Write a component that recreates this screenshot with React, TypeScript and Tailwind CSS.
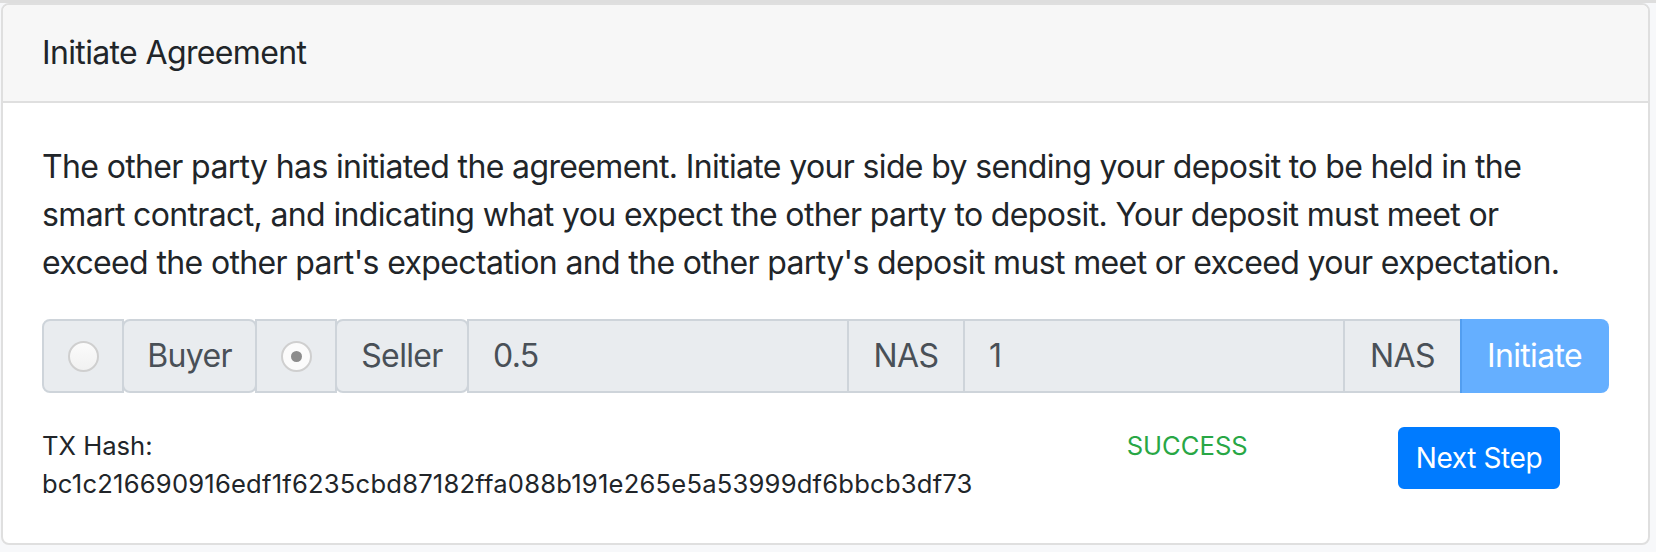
import React from "react";

const font = { fontFamily: "Inter, 'Noto Sans', sans-serif" };

function Radio({ checked }: { checked?: boolean }) {
  return (
    <div
      className={
        "flex h-[31px] w-[31px] items-center justify-center rounded-full border-2 border-[#cfcfcf] " +
        (checked ? "bg-[#fbfbfb]" : "bg-gradient-to-b from-[#fbfbfb] to-[#f1f1f1]")
      }
    >
      {checked ? <div className="h-[11px] w-[11px] rounded-full bg-[#8c8c8c]" /> : null}
    </div>
  );
}

export default function App() {
  return (
    <div className="min-h-screen bg-[#f7f8fa] text-[#212529]" style={font}>
      <div className="h-[3px] bg-[#dedede]" />
      <div className="ml-[1px] mr-[6px] overflow-hidden rounded-[8px] border-2 border-[#dfdfdf] bg-white">
        <div className="border-b-2 border-[#dfdfdf] bg-[#f7f7f7] px-[39px] py-[24px] text-[32px] leading-[48px] tracking-[-0.64px]">
          Initiate Agreement
        </div>
        <div className="p-[39px] pt-[40px]">
          <p className="mb-[32px] text-[32px] leading-[48px] tracking-[-0.64px]">
            <span className="block whitespace-nowrap">
              The other party has initiated the agreement. Initiate your side by sending your deposit to be held in the
            </span>
            <span className="block whitespace-nowrap">
              smart contract, and indicating what you expect the other party to deposit. Your deposit must meet or
            </span>
            <span className="block whitespace-nowrap">
              exceed the other part's expectation and the other party's deposit must meet or exceed your expectation.
            </span>
          </p>

          <div className="flex h-[74px] text-[32px] leading-[48px] tracking-[-0.64px] text-[#495057]">
            <div className="flex w-[82px] items-center justify-center rounded-l-[8px] border-2 border-[#ced4da] bg-[#e9ecef]">
              <Radio />
            </div>
            <div className="-ml-[2px] flex w-[135px] items-center justify-center rounded-[8px] border-2 border-[#ced4da] bg-[#e9ecef]">
              Buyer
            </div>
            <div className="-ml-[2px] flex w-[82px] items-center justify-center border-2 border-[#ced4da] bg-[#e9ecef]">
              <Radio checked />
            </div>
            <div className="-ml-[2px] flex w-[134px] items-center justify-center rounded-[8px] border-2 border-[#ced4da] bg-[#e9ecef]">
              Seller
            </div>
            <div className="-ml-[2px] flex min-w-0 flex-1 items-center border-2 border-[#ced4da] bg-[#e9ecef] px-[24px]">
              0.5
            </div>
            <div className="-ml-[2px] flex w-[118px] items-center justify-center border-2 border-[#ced4da] bg-[#e9ecef]">
              NAS
            </div>
            <div className="-ml-[2px] flex min-w-0 flex-1 items-center border-2 border-[#ced4da] bg-[#e9ecef] px-[24px]">
              1
            </div>
            <div className="-ml-[2px] flex w-[119px] items-center justify-center border-2 border-[#ced4da] bg-[#e9ecef]">
              NAS
            </div>
            <div className="-ml-[2px] flex w-[149px] items-center justify-center rounded-r-[8px] border-2 border-transparent bg-[#007bff] text-white opacity-60">
              Initiate
            </div>
          </div>

          <div className="-mx-[30px] mt-[34px] flex">
            <div className="w-2/3 px-[30px] text-[25.6px] leading-[38.4px]">
              <div>TX Hash:</div>
              <div className="tracking-[0.2px]">bc1c216690916edf1f6235cbd87182ffa088b191e265e5a53999df6bbcb3df73</div>
            </div>
            <div className="w-1/6 px-[30px] text-[25.6px] leading-[38.4px] text-[#28a745]">SUCCESS</div>
            <div className="w-1/6 px-[30px]">
              <button className="rounded-[6px] border-2 border-[#007bff] bg-[#007bff] px-[16px] py-[8px] text-[28px] leading-[42px] tracking-[-0.4px] text-white">
                Next Step
              </button>
            </div>
          </div>
        </div>
      </div>
    </div>
  );
}
